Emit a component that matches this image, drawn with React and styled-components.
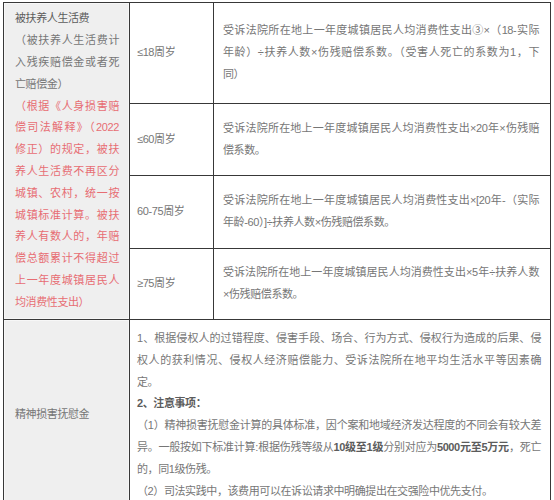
import styled, { createGlobalStyle } from 'styled-components'

const GlobalStyle = createGlobalStyle`
  body {
    margin: 0;
    background: #fff;
  }
`

const line = '#383838'

const Page = styled.div`
  padding: 2px 0 0 3px;
  font-family: "Liberation Sans", "Noto Sans CJK SC", sans-serif;
  font-size: 11px;
  letter-spacing: -0.4px;
  line-height: 21.8px;
  color: #767676;
`

const Table = styled.div`
  display: grid;
  grid-template-columns: 125px 83px 336px;
  grid-template-rows: 100px 71px 72px 70px auto;
  gap: 1px;
  width: max-content;
  background: ${line};
  border: 1px solid ${line};
`

const Cell = styled.div`
  display: flex;
  flex-direction: column;
  justify-content: center;
  background: #fff;
  padding: ${p => p.$pad || '0 11px 0 9px'};
  grid-row: ${p => p.$rows ? `span ${p.$rows}` : 'auto'};
  grid-column: ${p => p.$cols ? `span ${p.$cols}` : 'auto'};
`

const LabelCell = styled(Cell)`
  background: #efefef;
  box-shadow: inset 0 0 0 1px #f7f7f7;
  padding: 0 10px 0 11px;
`

const Line = styled.span`
  display: block;
  text-align: justify;
  text-align-last: ${p => p.$end ? 'left' : 'justify'};
  color: ${p => p.$red ? '#e76d73' : p.$dark ? '#5c5c5c' : 'inherit'};
  font-weight: ${p => p.$bold ? 700 : 400};
`

const Strong = styled.b`
  font-weight: 700;
  color: #5c5c5c;
`

const Lines = ({ lines, ...props }) =>
  lines.map((text, i) => (
    <Line key={i} $end={i === lines.length - 1} {...props}>{text}</Line>
  ))

const ages = [
  {
    age: '≤18周岁',
    lines: [
      '受诉法院所在地上一年度城镇居民人均消费性支出③×（18-实际',
      '年龄）÷扶养人数×伤残赔偿系数。（受害人死亡的系数为1，下',
      '同）',
    ],
  },
  {
    age: '≤60周岁',
    lines: [
      '受诉法院所在地上一年度城镇居民人均消费性支出×20年×伤残赔',
      '偿系数。',
    ],
  },
  {
    age: '60-75周岁',
    lines: [
      '受诉法院所在地上一年度城镇居民人均消费性支出×[20年-（实际',
      '年龄-60）]÷扶养人数×伤残赔偿系数。',
    ],
  },
  {
    age: '≥75周岁',
    lines: [
      '受诉法院所在地上一年度城镇居民人均消费性支出×5年÷扶养人数',
      '×伤残赔偿系数。',
    ],
  },
]

const App = () => (
  <Page>
    <GlobalStyle />
    <Table>
      <LabelCell $rows={4}>
        <Line $dark $end>被扶养人生活费</Line>
        <Lines lines={['（被扶养人生活费计', '入残疾赔偿金或者死', '亡赔偿金）']} />
        <Lines
          $red
          lines={[
            '（根据《人身损害赔',
            '偿司法解释》（2022',
            '修正）的规定，被扶',
            '养人生活费不再区分',
            '城镇、农村，统一按',
            '城镇标准计算。被扶',
            '养人有数人的，年赔',
            '偿总额累计不得超过',
            '上一年度城镇居民人',
            '均消费性支出）',
          ]}
        />
      </LabelCell>
      {ages.map(({ age, lines }, i) => [
        <Cell key={`a${i}`} $pad="0 6px 0 7px">{age}</Cell>,
        <Cell key={`t${i}`}><Lines lines={lines} /></Cell>,
      ])}

      <LabelCell>精神损害抚慰金</LabelCell>
      <Cell $cols={2} $pad="8px 9px 8px 7px">
        <Line>1、根据侵权人的过错程度、侵害手段、场合、行为方式、侵权行为造成的后果、侵</Line>
        <Line>权人的获利情况、侵权人经济赔偿能力、受诉法院所在地平均生活水平等因素确</Line>
        <Line $end>定。</Line>
        <Line $end $bold $dark>2、注意事项：</Line>
        <Line>（1）精神损害抚慰金计算的具体标准，因个案和地域经济发达程度的不同会有较大差</Line>
        <Line>
          异。一般按如下标准计算:根据伤残等级从<Strong>10级至1级</Strong>分别对应为<Strong>5000元至5万元</Strong>，死亡
        </Line>
        <Line $end>的，同1级伤残。</Line>
        <Line $end>（2）司法实践中，该费用可以在诉讼请求中明确提出在交强险中优先支付。</Line>
      </Cell>
    </Table>
  </Page>
)

export default App
